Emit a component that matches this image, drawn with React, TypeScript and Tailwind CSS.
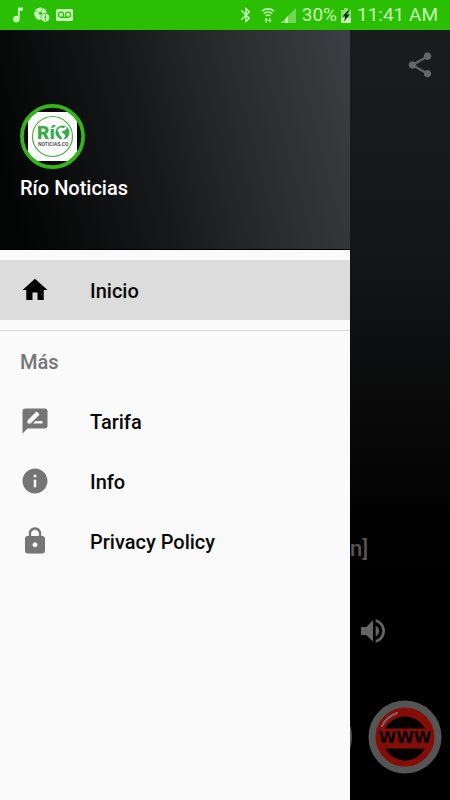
import type { ReactNode } from "react";
import {
  MdHome,
  MdInfo,
  MdLock,
  MdRateReview,
  MdShare,
  MdVolumeUp,
  MdMusicNote,
  MdBluetooth,
} from "react-icons/md";

function AlertDiscIcon() {
  return (
    <svg viewBox="0 0 16 16" className="size-4" fill="currentColor" aria-hidden="true">
      <circle cx="6.500" cy="6.800" r="6.300" />
      <path d="M6.500 6.500L1 3M6.500 6.500L9 .5" stroke="#2abf02" strokeWidth="0.600" />
      <circle cx="6.500" cy="6.300" r="1.500" fill="#2abf02" />
      <circle cx="11.300" cy="10.800" r="4.700" fill="#2abf02" />
      <circle cx="11.300" cy="10.800" r="4" />
      <path d="M10.700 8.200h1.300v3.200h-1.300zM10.700 12.200h1.300v1.200h-1.300z" fill="#2abf02" />
    </svg>
  );
}

function VoicemailIcon() {
  return (
    <svg viewBox="0 0 17 12" className="h-3 w-[17px]" aria-hidden="true">
      <rect width="17" height="12" rx="1.500" fill="currentColor" />
      <g fill="none" stroke="#2abf02" strokeWidth="1.200">
        <circle cx="5" cy="5.800" r="2.600" />
        <circle cx="12" cy="5.800" r="2.600" />
        <path d="M5 8.400h7" />
      </g>
    </svg>
  );
}

function WifiIcon() {
  return (
    <svg viewBox="0 0 14 16" className="h-4 w-3.5" fill="none" stroke="currentColor" aria-hidden="true">
      <path d="M1 4.200a9 9 0 0 1 12 0M2.800 6.600a6.400 6.400 0 0 1 8.400 0M4.600 9a3.800 3.800 0 0 1 4.800 0" strokeWidth="1.600" />
      <path d="M5.200 15.500v-3.400M8.800 11v3.400" strokeWidth="1.200" />
      <path d="M3.200 13.200l2-2.400 2 2.400zM6.800 13.200h4l-2 2.400z" fill="currentColor" stroke="none" />
    </svg>
  );
}

function SignalIcon() {
  return (
    <svg viewBox="0 0 15 15" className="size-[15px]" fill="currentColor" aria-hidden="true">
      <path d="M0 15L15 0v15z" opacity="0.450" />
      <path d="M0 15l2.500-2.500V15zM4 11l3-3v7H4z" />
    </svg>
  );
}

function BatteryIcon() {
  return (
    <svg viewBox="0 0 10 15" className="h-[15px] w-2.5" aria-hidden="true">
      <path d="M3 0h4v2h3v13H0V2h3z" fill="currentColor" opacity="0.600" />
      <path d="M0 10h10v5H0z" fill="currentColor" />
      <path d="M7 2.500L1.500 8.500h2.800L3 13.500 8.800 6.500H5.800L8.500 2.500z" fill="#062b00" />
    </svg>
  );
}

function RioLogo() {
  return (
    <svg viewBox="0 0 65 65" className="size-[65px]" role="img" aria-label="Río Noticias.co">
      <defs>
        <clipPath id="badge">
          <circle cx="32.500" cy="32.500" r="29" />
        </clipPath>
      </defs>
      <circle cx="32.500" cy="32.500" r="30" fill="#080909" />
      <rect x="8" y="8" width="49" height="49" fill="#fdfdfd" clipPath="url(#badge)" />
      <circle cx="32.500" cy="32.500" r="30.600" fill="none" stroke="#35b51c" strokeWidth="3.800" />
      <circle cx="32.500" cy="32.500" r="20" fill="none" stroke="#4fae4c" strokeWidth="1.200" />
      <text x="17" y="35" fontSize="19" fontWeight="900" fill="#35ad46" className="font-[Roboto,sans-serif]">
        Rí
      </text>
      <circle cx="42.500" cy="28.500" r="7" fill="#35ad46" />
      <path
        d="M37 26.500l3-3 4 .5 1-1.500 2 1.500-2.500 2.500-2 .5-1 1.500 2.500 1 1.500 2.500-2 3-1 1.500-1-3.500-2-2-.5-2.500z"
        fill="#fdfdfd"
      />
      <path d="M36 31.500l4.500 4.500H36z" fill="#fdfdfd" />
      <text x="18" y="42" fontSize="5" fontWeight="500" fill="#333" className="font-[Roboto,sans-serif]">
        NOTICIAS.CO
      </text>
    </svg>
  );
}

function WwwIcon() {
  return (
    <svg viewBox="0 0 74 74" className="size-[74px]" aria-hidden="true">
      <circle cx="37" cy="37" r="33" fill="#840e06" stroke="#555" strokeWidth="7" />
      <path d="M17 28.500a22.700 22.700 0 0 1 40 0zM17 48.500h40a22.700 22.700 0 0 1-40 0z" fill="#060101" />
      <path d="M14 26Q18 17 29 13" fill="none" stroke="#746a69" strokeWidth="2" strokeLinecap="round" />
      <text
        x="37"
        y="43"
        textAnchor="middle"
        fontSize="16"
        fontWeight="700"
        fill="#060101"
        className="font-['DejaVu_Sans',sans-serif]"
      >
        WWW
      </text>
    </svg>
  );
}

function DrawerItem({ icon, label, active = false }: { icon: ReactNode; label: string; active?: boolean }) {
  return (
    <li>
      <a
        href="#"
        aria-current={active ? "page" : undefined}
        className={
          active
            ? "flex h-[60px] items-center gap-10 bg-[#dcdcdc] px-5 text-black"
            : "flex h-[60px] items-center gap-10 px-5 text-[#757575]"
        }
      >
        {icon}
        <span className="pt-0.5 text-xl font-medium text-[#0a0a0a]">{label}</span>
      </a>
    </li>
  );
}

export default function App() {
  return (
    <div className="flex min-h-screen flex-col bg-black font-[Roboto,sans-serif]">
      <header className="flex h-[30px] items-center justify-between bg-[#2abf02] pr-3 pl-2 text-[#c6f5b8]">
        <div className="flex items-center gap-1.5">
          <MdMusicNote className="size-5" />
          <AlertDiscIcon />
          <VoicemailIcon />
        </div>
        <div className="flex items-center gap-1.5 text-[19px]">
          <MdBluetooth className="size-[18px]" />
          <WifiIcon />
          <SignalIcon />
          <span className="flex items-center gap-1">
            30%
            <BatteryIcon />
          </span>
          <span>11:41 AM</span>
        </div>
      </header>

      <div className="flex flex-1">
        <nav aria-label="Menú" className="w-[350px] shrink-0 bg-[#fafafa]">
          <div className="flex h-[220px] flex-col border-b border-black bg-[linear-gradient(75deg,#030404_5%,#191a1b_45%,#2b2e2f_72%,#3c3f43)] px-5 pt-[74px]">
            <RioLogo />
            <p className="pt-[5px] text-xl font-medium text-white">Río Noticias</p>
          </div>
          <ul className="border-b border-[#d6d6d6] py-2.5">
            <DrawerItem icon={<MdHome className="size-[30px]" />} label="Inicio" active />
          </ul>
          <h2 className="flex h-[60px] items-center px-5 pt-0.5 text-xl font-medium text-[#757575]">Más</h2>
          <ul>
            <DrawerItem icon={<MdRateReview className="size-[30px]" />} label="Tarifa" />
            <DrawerItem icon={<MdInfo className="size-[30px]" />} label="Info" />
            <DrawerItem icon={<MdLock className="size-[30px]" />} label="Privacy Policy" />
          </ul>
        </nav>

        <main className="flex min-w-0 flex-1 flex-col overflow-hidden bg-[linear-gradient(to_bottom,#1b1c1e,#151618_28%,#040404_58%,#000_70%)] text-[#656565]">
          <div className="flex h-[70px] items-center justify-end px-[15px]">
            <button type="button" aria-label="Compartir">
              <MdShare className="size-[30px]" />
            </button>
          </div>
          <div className="mt-auto flex flex-col pb-[26px]">
            <p className="text-[22px] leading-8 font-medium text-[#555]">n]</p>
            <button type="button" aria-label="Volumen" className="mt-[50px] self-start pl-[7px]">
              <MdVolumeUp className="size-8" />
            </button>
            <div className="mt-[53px] flex items-center justify-end gap-4 pr-2">
              <button
                type="button"
                aria-label="Reproducir"
                className="size-[72px] shrink-0 rounded-full border-4 border-[#555]"
              />
              <button type="button" aria-label="Sitio web" className="shrink-0">
                <WwwIcon />
              </button>
            </div>
          </div>
        </main>
      </div>
    </div>
  );
}
